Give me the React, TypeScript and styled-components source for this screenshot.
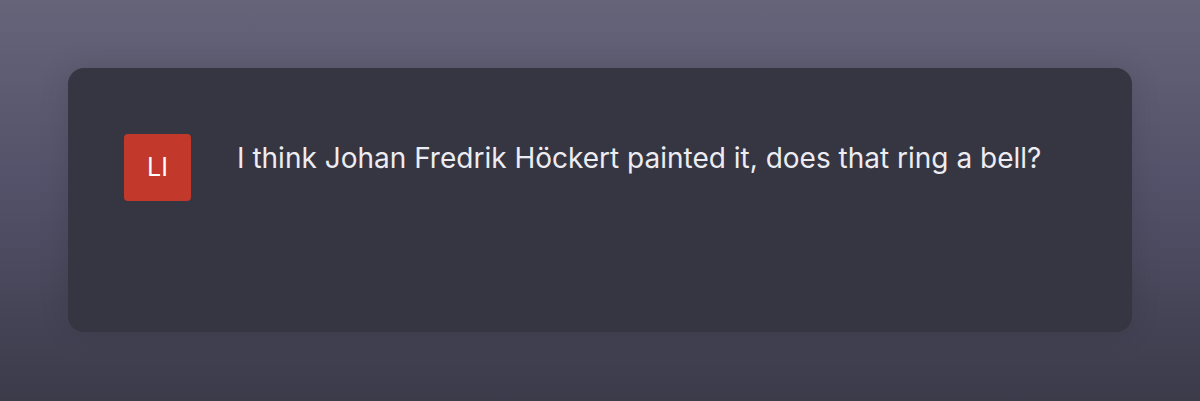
import React from "react";
import styled, { createGlobalStyle } from "styled-components";

const Global = createGlobalStyle`
  html, body { margin: 0; padding: 0; }
  body { background: #3d3c4b; }
`;

const Page = styled.div`
  width: 1200px;
  height: 401px;
  box-sizing: border-box;
  padding: 68px 68px 0 68px;
  background: linear-gradient(180deg, #666479 0%, #53526a 45%, #3c3b4a 100%);
`;

const Card = styled.div`
  height: 264px;
  box-sizing: border-box;
  background: #363542;
  border-radius: 16px;
  box-shadow: 0 0 30px rgba(0, 0, 0, 0.12);
  padding: 66px 56px;
  display: flex;
  align-items: flex-start;
  gap: 46px;
`;

const Avatar = styled.div<{ $bg: string }>`
  width: 67px;
  height: 67px;
  flex: none;
  border-radius: 4px;
  background: ${(p) => p.$bg};
  color: #ffffff;
  display: flex;
  align-items: center;
  justify-content: center;
  font-family: Inter, "Liberation Sans", sans-serif;
  font-size: 25px;
  line-height: 1;
`;

const Message = styled.p`
  margin: 0;
  padding-top: 6px;
  color: #ececf1;
  font-family: Inter, "Liberation Sans", sans-serif;
  font-size: 28px;
  line-height: 36px;
`;

export default function App() {
  return (
    <>
      <Global />
      <Page>
        <Card>
          <Avatar $bg="#c2382b">LI</Avatar>
          <Message>I think Johan Fredrik Höckert painted it, does that ring a bell?</Message>
        </Card>
      </Page>
    </>
  );
}
